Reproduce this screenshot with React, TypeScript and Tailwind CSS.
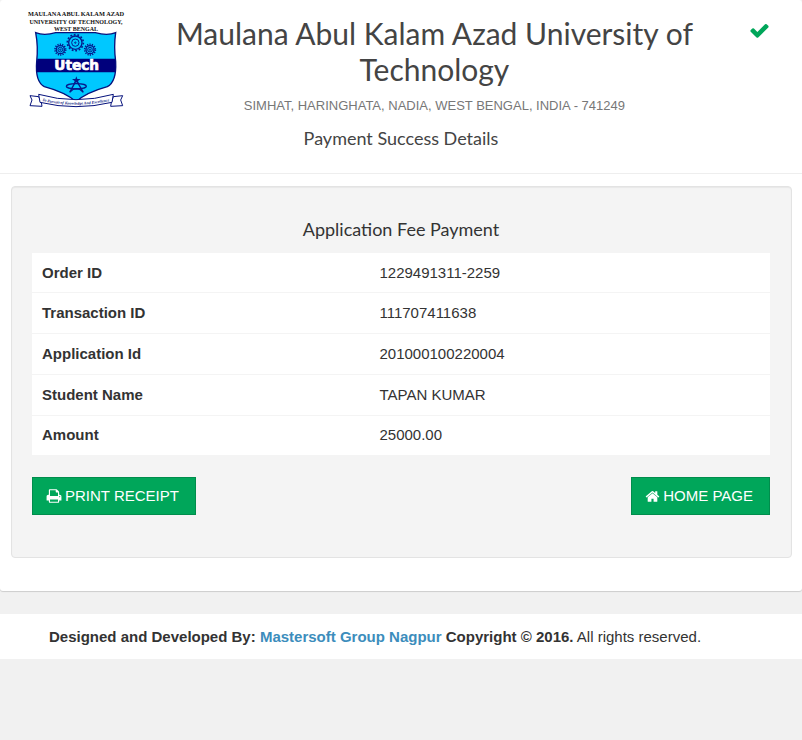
import React from 'react';

const details = [
  { label: 'Order ID', value: '1229491311-2259' },
  { label: 'Transaction ID', value: '111707411638' },
  { label: 'Application Id', value: '201000100220004' },
  { label: 'Student Name', value: 'TAPAN KUMAR' },
  { label: 'Amount', value: '25000.00' },
];

const PRINT =
  'M448 1536h896v-256h-896v256zm0-640h896v-384h-160q-40 0-68-28t-28-68v-160h-640v640zm1152 64q0-26-19-45t-45-19-45 19-19 45 19 45 45 19 45-19 19-45zm128 0v416q0 13-9.5 22.5t-22.5 9.5h-224v160q0 40-28 68t-68 28h-960q-40 0-68-28t-28-68v-160h-224q-13 0-22.5-9.5t-9.5-22.5v-416q0-79 56.5-135.5t135.5-56.5h64v-544q0-40 28-68t68-28h672q40 0 88 20t76 48l152 152q28 28 48 76t20 88v256h64q79 0 135.5 56.5t56.5 135.5z';
const HOME =
  'M1472 992v480q0 26-19 45t-45 19h-384v-384h-256v384h-384q-26 0-45-19t-19-45v-480q0-1 .5-3t.5-3l575-474 575 474q1 2 1 6zm223-69l-62 74q-8 9-21 11h-3q-13 0-21-7l-692-577-692 577q-12 8-24 7-13-2-21-11l-62-74q-8-10-7-23.5t11-21.5l719-599q32-26 76-26t76 26l244 204v-195q0-14 9-23t23-9h192q14 0 23 9t9 23v408l219 182q10 8 11 21.5t-7 23.5z';
const CHECK =
  'M1671 566q0 40-28 68l-724 724-136 136q-28 28-68 28t-68-28l-136-136-362-362q-28-28-28-68t28-68l136-136q28-28 68-28t68 28l294 295 656-657q28-28 68-28t68 28l136 136q28 28 28 68z';

function Icon({ d, className }: { d: string; className: string }) {
  return (
    <svg viewBox="0 0 1792 1792" fill="currentColor" aria-hidden="true" className={className}>
      <path d={d} />
    </svg>
  );
}

function Gear({ x, y, r }: { x: number; y: number; r: number }) {
  const step = (2 * Math.PI * r) / 28;
  return (
    <g fill="none" stroke="#061a8c">
      <circle cx={x} cy={y} r={r} strokeWidth="5" strokeDasharray={`${step} ${step}`} />
      <circle cx={x} cy={y} r={r - 4} strokeWidth="4" />
      <circle cx={x} cy={y} r={r / 2 - 1} strokeWidth="3" />
      <circle cx={x} cy={y} r="2" strokeWidth="3" />
    </g>
  );
}

function Logo() {
  return (
    <svg viewBox="0 0 336 330" role="img" aria-label="University crest" className="h-[110px] w-28">
      <g fill="#111111" textAnchor="middle" fontFamily="'Liberation Serif', serif" fontWeight="700">
        <text x="168" y="33" fontSize="19">MAULANA ABUL KALAM AZAD</text>
        <text x="168" y="56" fontSize="18">UNIVERSITY OF TECHNOLOGY,</text>
        <text x="168" y="79" fontSize="18">WEST BENGAL</text>
      </g>
      <path
        d="M47 83 Q72 93 107 83 H226 Q262 93 287 83 Q281 125 287 170 Q290 230 262 245 Q200 262 168 290 Q136 262 73 245 Q45 230 50 170 Q55 125 47 83Z"
        fill="#00c8ff"
        stroke="#06127c"
        strokeWidth="4"
      />
      <path d="M52 161 H285 Q288 183 286 202 H50 Q48 183 52 161Z" fill="#00007c" />
      <Gear x={166} y={113} r={24} />
      <Gear x={121} y={134} r={16} />
      <Gear x={210} y={134} r={16} />
      <text x="170" y="196" fontSize="41" fontWeight="900" textAnchor="middle" fill="#ffffff" stroke="#ffffff" strokeWidth="2" fontFamily="'DejaVu Sans', sans-serif">
        Utech
      </text>
      <g fill="none" stroke="#061a8c" strokeWidth="4">
        <ellipse cx="169" cy="244" rx="30" ry="8" />
        <path d="M165 233 L149 262 M173 233 L190 262 M149 262 Q169 240 190 262" />
      </g>
      <path d="M169 214 L172 222 L182 222 L174 228 L177 237 L169 232 L161 237 L164 228 L156 222 L166 222Z" fill="#061a8c" />
      <g fill="#ffffff" stroke="#06127c" strokeWidth="3" strokeLinejoin="round">
        <path d="M56 275 L30 272 L36 285 L30 302 L66 304 L64 292Z" />
        <path d="M280 275 L308 272 L302 285 L308 302 L272 304 L274 292Z" />
        <path d="M56 268 Q168 300 280 268 L276 292 Q168 318 60 292Z" />
      </g>
      <path id="motto" d="M58 286 Q168 312 278 286" fill="none" />
      <text fontSize="12" fontWeight="700" fontStyle="italic" fill="#06127c" fontFamily="'Liberation Serif', serif" textAnchor="middle">
        <textPath href="#motto" startOffset="50%">In Pursuit of Knowledge And Excellence</textPath>
      </text>
    </svg>
  );
}

const buttonClass =
  'flex h-[38px] cursor-pointer items-center gap-[3px] border border-[#008d4c] bg-[#00a65a] pr-4 pl-[13px] text-[15px] text-white';

export default function App() {
  return (
    <div className="min-h-screen bg-[#f1f1f1] font-['Liberation_Sans',Arial,sans-serif] text-[15px] text-[#333333]">
      <main className="rounded-[3px] bg-white pb-[33px] shadow-[0_1px_1px_rgba(0,0,0,0.15)]">
        <header className="border-b border-[#eeeeee] pb-[25px] text-center">
          <div className="grid grid-cols-12">
            <div className="col-span-2 pt-[5px] pl-5">
              <Logo />
            </div>
            <div className="col-span-9 px-4 pt-[15px]">
              <h1 className="font-['Lato',Calibri,sans-serif] text-[30px] leading-9 text-[#444444]">
                Maulana Abul Kalam Azad University of Technology
              </h1>
              <p className="mt-[9px] text-[13px] leading-5 text-[#777777]">
                SIMHAT, HARINGHATA, NADIA, WEST BENGAL, INDIA - 741249
              </p>
            </div>
            <div className="col-span-1 pt-5 pl-3.5">
              <Icon d={CHECK} className="h-[21px] w-[21px] text-[#00a65a]" />
            </div>
          </div>
          <h2 className="mt-3 font-['Lato',Calibri,sans-serif] text-lg leading-5 text-[#444444]">
            Payment Success Details
          </h2>
        </header>

        <section className="mx-2.5 mt-3 ml-[11px] rounded border border-[#e3e3e3] bg-[#f4f4f4] pt-8 pr-[21px] pb-[42px] pl-5 shadow-[inset_0_1px_1px_rgba(0,0,0,0.05)]">
          <h3 className="text-center font-['Lato',Calibri,sans-serif] text-lg leading-5 text-[#333333]">
            Application Fee Payment
          </h3>
          <table className="mt-3.5 h-[202px] w-full border-collapse bg-white text-left">
            <tbody>
              {details.map((row) => (
                <tr key={row.label} className="border-t border-[#f4f4f4] first:border-t-0">
                  <th scope="row" className="w-[46%] px-2.5 leading-5 font-bold">
                    {row.label}
                  </th>
                  <td className="px-2 leading-5">{row.value}</td>
                </tr>
              ))}
            </tbody>
          </table>
          <div className="mt-[22px] flex justify-between">
            <button type="button" className={buttonClass}>
              <Icon d={PRINT} className="size-4" />
              PRINT RECEIPT
            </button>
            <button type="button" className={buttonClass}>
              <Icon d={HOME} className="size-[15px]" />
              HOME PAGE
            </button>
          </div>
        </section>
      </main>

      <footer className="mt-[23px] bg-white px-[49px] py-3 leading-[21px]">
        <strong>
          Designed and Developed By:{' '}
          <a href="#" className="text-[#3c8dbc]">
            Mastersoft Group Nagpur
          </a>{' '}
          Copyright © 2016.
        </strong>{' '}
        All rights reserved.
      </footer>
    </div>
  );
}
